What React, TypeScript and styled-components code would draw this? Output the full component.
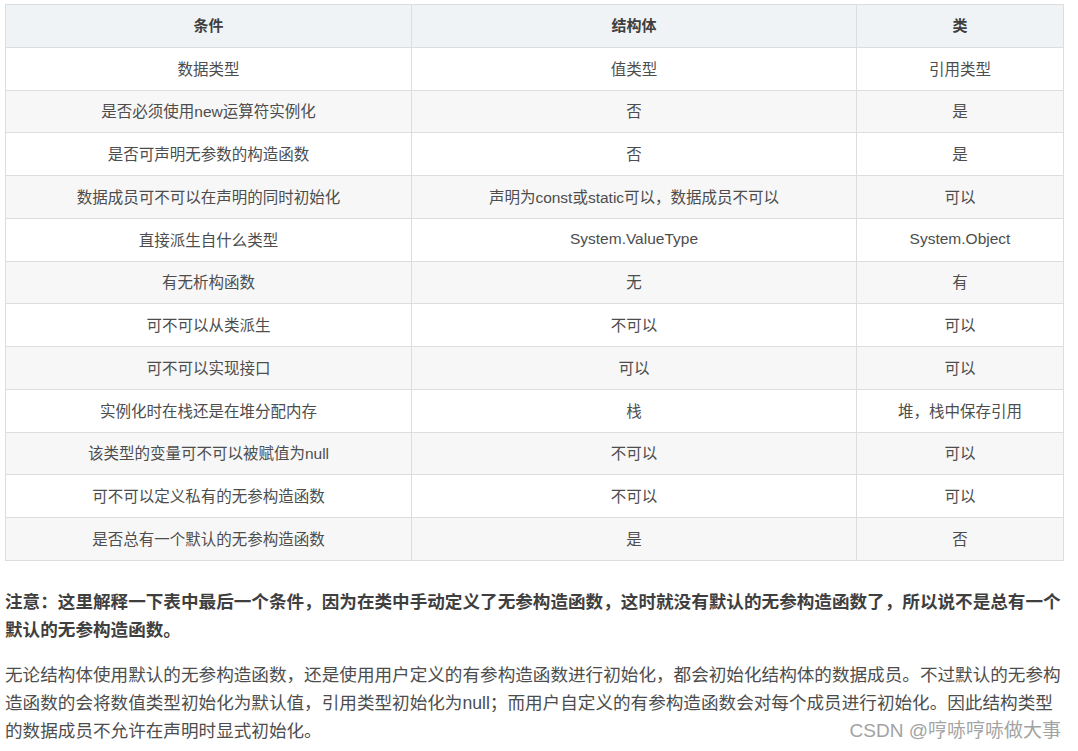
import React from "react";
import styled, { createGlobalStyle } from "styled-components";

const Global = createGlobalStyle`
  html, body { margin: 0; padding: 0; background: #fff; }
  body {
    font-family: "Liberation Sans", "Noto Sans CJK SC", sans-serif;
    color: #4d4d4d;
  }
`;

const Page = styled.div`
  position: relative;
  width: 1078px;
  height: 751px;
  padding: 4px 0 0 5px;
  box-sizing: border-box;
  overflow: hidden;
`;

const Table = styled.table`
  width: 1058px;
  border-collapse: collapse;
  table-layout: fixed;
  font-size: 15.5px;
  color: #4d4d4d;
`;

const HeadCell = styled.th`
  background: #eff3f5;
  border: 1px solid #dddddd;
  font-weight: bold;
  text-align: center;
  height: 42.8px;
  padding: 0 8px 2px;
  box-sizing: border-box;
  font-size: 15px;
  color: #3f3f3f;
`;

const Row = styled.tr<{ $alt: boolean }>`
  background: ${(p) => (p.$alt ? "#f7f7f7" : "#ffffff")};
`;

const Cell = styled.td`
  border: 1px solid #dddddd;
  text-align: center;
  height: 42.75px;
  padding: 0 8px 2px;
  box-sizing: border-box;
  white-space: nowrap;
`;

const Para = styled.div<{ $bold?: boolean; $top: number }>`
  margin-top: ${(p) => p.$top}px;
  font-size: 17.6px;
  line-height: 28px;
  font-weight: ${(p) => (p.$bold ? "bold" : "normal")};
  color: ${(p) => (p.$bold ? "#3f3f3f" : "#4d4d4d")};
`;

const Line = styled.div`
  white-space: nowrap;
`;

const Watermark = styled.div`
  position: absolute;
  right: 17px;
  top: 718px;
  font-size: 19px;
  line-height: 26px;
  color: #a3a3a3;
  white-space: nowrap;
`;

const rows: [string, string, string][] = [
  ["数据类型", "值类型", "引用类型"],
  ["是否必须使用new运算符实例化", "否", "是"],
  ["是否可声明无参数的构造函数", "否", "是"],
  ["数据成员可不可以在声明的同时初始化", "声明为const或static可以，数据成员不可以", "可以"],
  ["直接派生自什么类型", "System.ValueType", "System.Object"],
  ["有无析构函数", "无", "有"],
  ["可不可以从类派生", "不可以", "可以"],
  ["可不可以实现接口", "可以", "可以"],
  ["实例化时在栈还是在堆分配内存", "栈", "堆，栈中保存引用"],
  ["该类型的变量可不可以被赋值为null", "不可以", "可以"],
  ["可不可以定义私有的无参构造函数", "不可以", "可以"],
  ["是否总有一个默认的无参构造函数", "是", "否"],
];

export default function App() {
  return (
    <>
      <Global />
      <Page>
        <Table>
          <colgroup>
            <col style={{ width: 406 }} />
            <col style={{ width: 445 }} />
            <col style={{ width: 207 }} />
          </colgroup>
          <thead>
            <tr>
              <HeadCell>条件</HeadCell>
              <HeadCell>结构体</HeadCell>
              <HeadCell>类</HeadCell>
            </tr>
          </thead>
          <tbody>
            {rows.map((r, i) => (
              <Row key={i} $alt={i % 2 === 1}>
                <Cell>{r[0]}</Cell>
                <Cell>{r[1]}</Cell>
                <Cell>{r[2]}</Cell>
              </Row>
            ))}
          </tbody>
        </Table>
        <Para $bold $top={27}>
          <Line>注意：这里解释一下表中最后一个条件，因为在类中手动定义了无参构造函数，这时就没有默认的无参构造函数了，所以说不是总有一个</Line>
          <Line>默认的无参构造函数。</Line>
        </Para>
        <Para $top={17}>
          <Line>无论结构体使用默认的无参构造函数，还是使用用户定义的有参构造函数进行初始化，都会初始化结构体的数据成员。不过默认的无参构</Line>
          <Line>造函数的会将数值类型初始化为默认值，引用类型初始化为null；而用户自定义的有参构造函数会对每个成员进行初始化。因此结构类型</Line>
          <Line>的数据成员不允许在声明时显式初始化。</Line>
        </Para>
        <Watermark>CSDN @哼哧哼哧做大事</Watermark>
      </Page>
    </>
  );
}
